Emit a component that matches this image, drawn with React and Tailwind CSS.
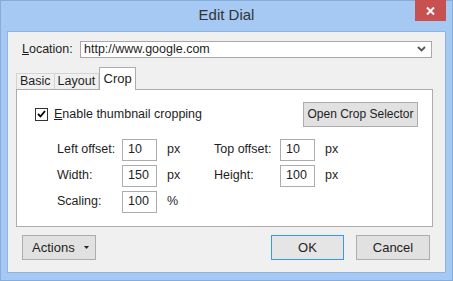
import React from "react";

const font = { fontFamily: '"Liberation Sans", Arial, sans-serif' };

function Field({ label, value, unit, labelW = "w-[65px]" }) {
  return (
    <div className="flex items-center">
      <span className={`${labelW} shrink-0`}>{label}</span>
      <div className="w-[35px] h-[22px] border border-[#acacac] bg-white flex items-center pl-[5px] shrink-0">
        {value}
      </div>
      <span className="ml-[10px]">{unit}</span>
    </div>
  );
}

export default function App() {
  return (
    <div
      className="w-[453px] h-[281px] bg-[#a5c9f3] border border-[#86acdc] flex flex-col text-[12.5px] text-[#1e1e1e]"
      style={font}
    >
      {/* title bar */}
      <div className="relative h-[30px] shrink-0 flex items-center justify-center">
        <span className="text-[15px] text-[#333] mt-[-1px]">Edit Dial</span>
        <div className="absolute right-[6px] top-[-1px] w-[31px] h-[21px] bg-[#c75050] flex items-center justify-center">
          <svg width="9" height="8" viewBox="0 0 9 8">
            <path d="M1 0.5 L8 7.5 M8 0.5 L1 7.5" stroke="white" strokeWidth="2" />
          </svg>
        </div>
      </div>

      {/* client area */}
      <div className="flex-1 ml-[6px] mr-[6px] mb-[7px] bg-[#f0f0f0] border border-[#8fb4e2] flex flex-col">
        {/* location */}
        <div className="flex items-center mt-[8px] ml-[14px] mr-[13px]">
          <span className="w-[58px] shrink-0">
            <span className="underline">L</span>ocation:
          </span>
          <div className="flex-1 h-[17px] bg-white border border-[#a9a9a9] flex items-center justify-between pl-[3px] pr-[5px]">
            <span>http://www.google.com</span>
            <svg width="9" height="6" viewBox="0 0 9 6">
              <path d="M1 1 L4.5 4.5 L8 1" stroke="#555" strokeWidth="1.8" fill="none" />
            </svg>
          </div>
        </div>

        {/* tabs */}
        <div className="flex items-end mt-[8px] ml-[8px] h-[22px]">
          <div className="h-[16px] px-[3px] border border-b-0 border-[#d4d4d4] bg-[#f0f0f0] flex items-center">Basic</div>
          <div className="h-[16px] px-[3px] border border-l-0 border-b-0 border-[#d4d4d4] bg-[#f0f0f0] flex items-center">Layout</div>
          <div className="relative z-10 h-[23px] mb-[-1px] w-[37px] border border-b-0 border-[#acacac] bg-white flex items-start justify-center pt-[1px] text-[13px]">
            Crop
          </div>
        </div>

        {/* panel */}
        <div className="ml-[8px] mr-[12px] h-[138px] bg-white border border-[#acacac] flex flex-col">
          <div className="flex items-center justify-between mt-[12px] ml-[18px] mr-[14px]">
            <div className="flex items-center">
              <div className="w-[13px] h-[13px] border border-[#333] bg-white flex items-center justify-center">
                <svg width="9" height="8" viewBox="0 0 9 8">
                  <path d="M1 4 L3.5 6.5 L8 1" stroke="#000" strokeWidth="1.8" fill="none" />
                </svg>
              </div>
              <span className="ml-[6px]">
                <span className="underline">E</span>nable thumbnail cropping
              </span>
            </div>
            <div className="w-[115px] h-[25px] bg-[#e1e1e1] border border-[#adadad] flex items-center justify-center text-[12px]">
              Open Crop Selector
            </div>
          </div>

          <div className="flex flex-col gap-[4px] mt-[12px] ml-[40px]">
            <div className="flex items-center">
              <div className="w-[157px]">
                <Field label="Left offset:" value="10" unit="px" />
              </div>
              <Field label="Top offset:" value="10" unit="px" labelW="w-[66px]" />
            </div>
            <div className="flex items-center">
              <div className="w-[157px]">
                <Field label="Width:" value="150" unit="px" />
              </div>
              <Field label="Height:" value="100" unit="px" labelW="w-[66px]" />
            </div>
            <div className="flex items-center">
              <Field label="Scaling:" value="100" unit="%" />
            </div>
          </div>
        </div>

        {/* buttons */}
        <div className="flex items-center mt-[8px] ml-[14px] mr-[15px]">
          <div className="w-[74px] h-[25px] bg-[#e1e1e1] border border-[#adadad] flex items-center pl-[9px] text-[13px]">
            Actions
            <svg className="ml-[9px]" width="5" height="3" viewBox="0 0 5 3">
              <path d="M0 0 H5 L2.5 3 Z" fill="#222" />
            </svg>
          </div>
          <div className="flex-1" />
          <div className="w-[73px] h-[25px] bg-[#e5e5e5] border border-[#3399ff] flex items-center justify-center text-[13px]">
            OK
          </div>
          <div className="ml-[12px] w-[74px] h-[25px] bg-[#e1e1e1] border border-[#adadad] flex items-center justify-center text-[13px]">
            Cancel
          </div>
        </div>
      </div>
    </div>
  );
}
